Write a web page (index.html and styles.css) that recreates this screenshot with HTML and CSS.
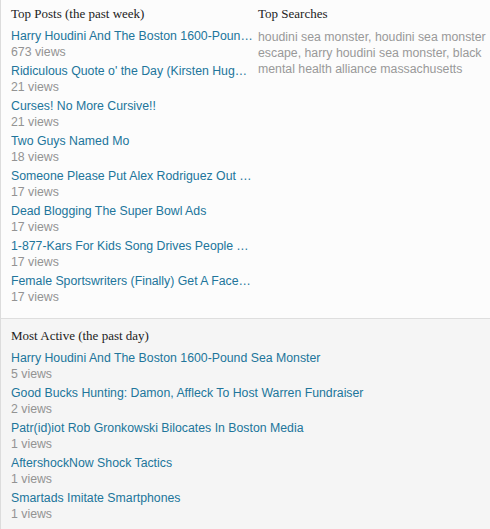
FILE: index.html
```html
<!DOCTYPE html>
<html>
<head>
<meta charset="utf-8">
<link rel="stylesheet" href="styles.css">
</head>
<body>
<div class="widget">
  <section class="top">
    <div class="col posts">
      <h3 class="heading">Top Posts (the past week)</h3>
      <ul class="list">
        <li><a href="#">Harry Houdini And The Boston 1600-Pound Sea Monster</a><span class="views">673 views</span></li>
        <li><a href="#">Ridiculous Quote o' the Day (Kirsten Hughes)</a><span class="views">21 views</span></li>
        <li><a href="#">Curses! No More Cursive!!</a><span class="views">21 views</span></li>
        <li><a href="#">Two Guys Named Mo</a><span class="views">18 views</span></li>
        <li><a href="#">Someone Please Put Alex Rodriguez Out Of His Misery</a><span class="views">17 views</span></li>
        <li><a href="#">Dead Blogging The Super Bowl Ads</a><span class="views">17 views</span></li>
        <li><a href="#">1-877-Kars For Kids Song Drives People To Madness</a><span class="views">17 views</span></li>
        <li><a href="#">Female Sportswriters (Finally) Get A Face In The Crowd</a><span class="views">17 views</span></li>
      </ul>
    </div>
    <div class="col searches">
      <h3 class="heading">Top Searches</h3>
      <p class="terms">houdini sea monster, houdini sea monster escape, harry houdini sea monster, black mental health alliance massachusetts</p>
    </div>
  </section>
  <section class="bottom">
    <h3 class="heading">Most Active (the past day)</h3>
    <ul class="list">
      <li><a href="#">Harry Houdini And The Boston 1600-Pound Sea Monster</a><span class="views">5 views</span></li>
      <li><a href="#">Good Bucks Hunting: Damon, Affleck To Host Warren Fundraiser</a><span class="views">2 views</span></li>
      <li><a href="#">Patr(id)iot Rob Gronkowski Bilocates In Boston Media</a><span class="views">1 views</span></li>
      <li><a href="#">AftershockNow Shock Tactics</a><span class="views">1 views</span></li>
      <li><a href="#">Smartads Imitate Smartphones</a><span class="views">1 views</span></li>
    </ul>
  </section>
</div>
</body>
</html>
```

FILE: styles.css
```css
html, body {
  margin: 0;
  padding: 0;
  background: #f5f5f5;
}
body {
  font-family: "Liberation Sans", Arial, sans-serif;
  font-size: 12.3px;
}
.widget {
  border-left: 1px solid #dcdcdc;
  min-height: 529px;
  box-sizing: border-box;
}
.top {
  background: #fcfcfc;
  display: grid;
  grid-template-columns: 242px 1fr;
  column-gap: 5px;
  padding: 5px 3px 9px 10px;
}
.col {
  min-width: 0;
}
.heading {
  margin: 0 0 6px;
  font-family: "Liberation Serif", "Times New Roman", serif;
  font-weight: normal;
  font-size: 13px;
  line-height: 18px;
  color: #222;
}
.list {
  list-style: none;
  margin: 0;
  padding: 0;
}
.list li {
  margin-bottom: 5px;
}
.list a {
  display: block;
  color: #21759b;
  text-decoration: none;
  line-height: 15px;
  white-space: nowrap;
  overflow: hidden;
  text-overflow: ellipsis;
}
.views {
  display: block;
  color: #939393;
  line-height: 16px;
}
.list li {
  margin-bottom: 4px;
}
.terms {
  margin: 0;
  color: #999;
  line-height: 16px;
}
.bottom {
  border-top: 1px solid #dedede;
  padding: 8px 10px 0 10px;
}
```
